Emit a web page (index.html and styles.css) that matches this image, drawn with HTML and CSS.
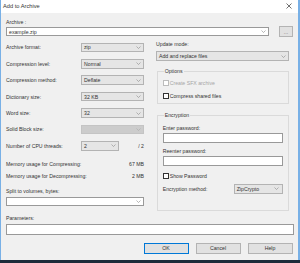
FILE: index.html
```html
<!DOCTYPE html>
<html>
<head>
<meta charset="utf-8">
<link rel="stylesheet" href="styles.css">
</head>
<body>
<div class="window">
  <div class="titlebar">
    <span class="title">Add to Archive</span>
    <svg class="close" width="6" height="6" viewBox="0 0 6 6"><path d="M0.5 0.5 L5.5 5.5 M5.5 0.5 L0.5 5.5" stroke="#333" stroke-width="0.7"/></svg>
  </div>
  <div class="content">
    <div class="label">Archive :</div>
    <div class="archive-row">
      <div class="combo edit archive-input"><span>example.zip</span><svg class="arrow" width="5" height="3" viewBox="0 0 5 3"><path d="M0.5 0.5 L2.5 2.5 L4.5 0.5" fill="none" stroke="#888" stroke-width="0.6"/></svg></div>
      <div class="btn browse">...</div>
    </div>
    <div class="columns">
      <div class="left">
        <div class="row"><span class="label">Archive format:</span><div class="combo"><span>zip</span><svg class="arrow" width="5" height="3" viewBox="0 0 5 3"><path d="M0.5 0.5 L2.5 2.5 L4.5 0.5" fill="none" stroke="#888" stroke-width="0.6"/></svg></div></div>
        <div class="row"><span class="label">Compression level:</span><div class="combo"><span>Normal</span><svg class="arrow" width="5" height="3" viewBox="0 0 5 3"><path d="M0.5 0.5 L2.5 2.5 L4.5 0.5" fill="none" stroke="#888" stroke-width="0.6"/></svg></div></div>
        <div class="row"><span class="label">Compression method:</span><div class="combo"><span>Deflate</span><svg class="arrow" width="5" height="3" viewBox="0 0 5 3"><path d="M0.5 0.5 L2.5 2.5 L4.5 0.5" fill="none" stroke="#888" stroke-width="0.6"/></svg></div></div>
        <div class="row"><span class="label">Dictionary size:</span><div class="combo"><span>32 KB</span><svg class="arrow" width="5" height="3" viewBox="0 0 5 3"><path d="M0.5 0.5 L2.5 2.5 L4.5 0.5" fill="none" stroke="#888" stroke-width="0.6"/></svg></div></div>
        <div class="row"><span class="label">Word size:</span><div class="combo"><span>32</span><svg class="arrow" width="5" height="3" viewBox="0 0 5 3"><path d="M0.5 0.5 L2.5 2.5 L4.5 0.5" fill="none" stroke="#888" stroke-width="0.6"/></svg></div></div>
        <div class="row"><span class="label">Solid Block size:</span><div class="combo disabled"><span></span><svg class="arrow" width="5" height="3" viewBox="0 0 5 3"><path d="M0.5 0.5 L2.5 2.5 L4.5 0.5" fill="none" stroke="#aaa" stroke-width="0.6"/></svg></div></div>
        <div class="row"><span class="label">Number of CPU threads:</span><div class="combo cpu"><span>2</span><svg class="arrow" width="5" height="3" viewBox="0 0 5 3"><path d="M0.5 0.5 L2.5 2.5 L4.5 0.5" fill="none" stroke="#888" stroke-width="0.6"/></svg></div><span class="of">/ 2</span></div>
        <div class="mem first"><span>Memory usage for Compressing:</span><span>67 MB</span></div>
        <div class="mem"><span>Memory usage for Decompressing:</span><span>2 MB</span></div>
        <div class="label split-label">Split to volumes, bytes:</div>
        <div class="combo edit split"><span></span><svg class="arrow" width="5" height="3" viewBox="0 0 5 3"><path d="M0.5 0.5 L2.5 2.5 L4.5 0.5" fill="none" stroke="#888" stroke-width="0.6"/></svg></div>
      </div>
      <div class="right">
        <div class="label update-label">Update mode:</div>
        <div class="combo update"><span>Add and replace files</span><svg class="arrow" width="5" height="3" viewBox="0 0 5 3"><path d="M0.5 0.5 L2.5 2.5 L4.5 0.5" fill="none" stroke="#888" stroke-width="0.6"/></svg></div>
        <fieldset class="group options">
          <legend>Options</legend>
          <div class="check disabled-text first"><span class="box"></span>Create SFX archive</div>
          <div class="check"><span class="box"></span>Compress shared files</div>
        </fieldset>
        <fieldset class="group encryption">
          <legend>Encryption</legend>
          <div class="label enc-first">Enter password:</div>
          <div class="input"></div>
          <div class="label enc-next">Reenter password:</div>
          <div class="input"></div>
          <div class="check show"><span class="box"></span>Show Password</div>
          <div class="method-row"><span class="label">Encryption method:</span><div class="combo method"><span>ZipCrypto</span><svg class="arrow" width="5" height="3" viewBox="0 0 5 3"><path d="M0.5 0.5 L2.5 2.5 L4.5 0.5" fill="none" stroke="#888" stroke-width="0.6"/></svg></div></div>
        </fieldset>
      </div>
    </div>
    <div class="label params-label">Parameters:</div>
    <div class="input params"></div>
    <div class="buttons">
      <div class="btn default">OK</div>
      <div class="btn">Cancel</div>
      <div class="btn">Help</div>
    </div>
  </div>
  <div class="taskbar"></div>
</div>
</body>
</html>
```

FILE: styles.css
```css
* { box-sizing: border-box; }
html, body { margin: 0; padding: 0; }
body {
  width: 300px;
  height: 263px;
  overflow: hidden;
  font-family: "Liberation Sans", Arial, sans-serif;
  font-size: 5.2px;
  color: #333;
  background: #f0f0f0;
}
.window {
  width: 300px;
  height: 263px;
  display: flex;
  flex-direction: column;
  border-left: 1px solid #78b0e6;
  border-right: 2px solid #78b0e6;
  background: #f0f0f0;
}
.titlebar {
  height: 13px;
  background: #fff;
  display: flex;
  align-items: center;
  justify-content: space-between;
  padding: 0 6px 1px 2px;
  flex: none;
}
.title { font-size: 5.7px; color: #333; }
.content {
  flex: 1;
  padding: 6px 5px 0 5px;
  display: flex;
  flex-direction: column;
}
.taskbar {
  height: 3px;
  background: #1d2b3a;
  margin: 0 -2px 0 -1px;
  flex: none;
}
.label { line-height: 6px; height: 6px; white-space: nowrap; }
.archive-row {
  display: flex;
  align-items: center;
  margin-top: 1px;
  height: 11px;
}
.combo {
  height: 9.5px;
  background: #e5e5e5;
  border: 0.6px solid #b3b3b3;
  display: flex;
  align-items: center;
  justify-content: space-between;
  padding: 0 2.5px 0 2px;
  white-space: nowrap;
}
.combo.edit { background: #fff; border-color: #999; }
.combo.disabled { background: #cccccc; border-color: #c4c4c4; }
.arrow { flex: none; }
.archive-input { width: 263px; height: 8.6px; }
.btn {
  background: #e1e1e1;
  border: 0.6px solid #b3b3b3;
  display: flex;
  align-items: center;
  justify-content: center;
  height: 11.5px;
  width: 45px;
}
.btn.browse { width: 14px; height: 11px; margin-left: 10px; color: #666; }
.btn.default { border: 0.8px solid #0078d7; }
.columns {
  display: flex;
  margin-top: 4px;
  height: 170px;
}
.left { width: 138px; padding-top: 1.7px; display: flex; flex-direction: column; }
.right { width: 133px; margin-left: 12px; display: flex; flex-direction: column; }
.row {
  display: flex;
  align-items: center;
  height: 9.5px;
  margin-bottom: 6.9px;
}
.row .label { width: 75px; }
.row .combo { width: 63px; }
.row .combo.cpu { width: 38px; }
.of { margin-left: auto; }
.mem {
  display: flex;
  justify-content: space-between;
  line-height: 6px;
  margin-top: 6px;
}
.mem.first { margin-top: 3.5px; }
.split-label { margin-top: 9px; }
.split { margin-top: 3.3px; height: 8.7px; width: 138px; }
.update-label { margin-top: 0.3px; }
.combo.update { margin-top: 4px; height: 10px; width: 133px; }
.group {
  margin: 0;
  padding: 0 5px;
  border: 0.7px solid #dadada;
  min-width: 0;
  width: 132px;
  margin-left: 0.7px;
}
.group legend {
  padding: 0 1px;
  margin-left: 1px;
  line-height: 6px;
  font-size: 5.2px;
}
.options { margin-top: 7px; height: 36px; }
.encryption { margin-top: 8px; height: 98.7px; }
.check {
  display: flex;
  align-items: center;
  line-height: 6px;
  height: 6px;
  margin-top: 7px;
}
.check.first { margin-top: 5.7px; }
.box {
  width: 6px;
  height: 6px;
  border: 0.6px solid #333;
  background: #fff;
  margin-right: 1px;
  flex: none;
}
.disabled-text { color: #a6a6a6; }
.disabled-text .box { border-color: #bcbcbc; }
.enc-first { margin-top: 6.3px; }
.enc-next { margin-top: 5.7px; }
.input {
  height: 10px;
  background: #fff;
  border: 0.6px solid #999;
  margin-top: 2px;
  width: 120px;
}
.right .input + .label { margin-top: 5.7px; }
.check.show { margin-top: 6.7px; }
.method-row {
  display: flex;
  align-items: center;
  justify-content: space-between;
  margin-top: 5.3px;
  width: 120px;
}
.combo.method { width: 49px; height: 9.3px; }
.params-label { margin-top: 4px; }
.input.params { width: 287.5px; height: 10.7px; margin-top: 3.3px; }
.buttons {
  display: flex;
  justify-content: flex-end;
  gap: 7px;
  margin-top: 7.7px;
  padding-right: 0.5px;
}
```
